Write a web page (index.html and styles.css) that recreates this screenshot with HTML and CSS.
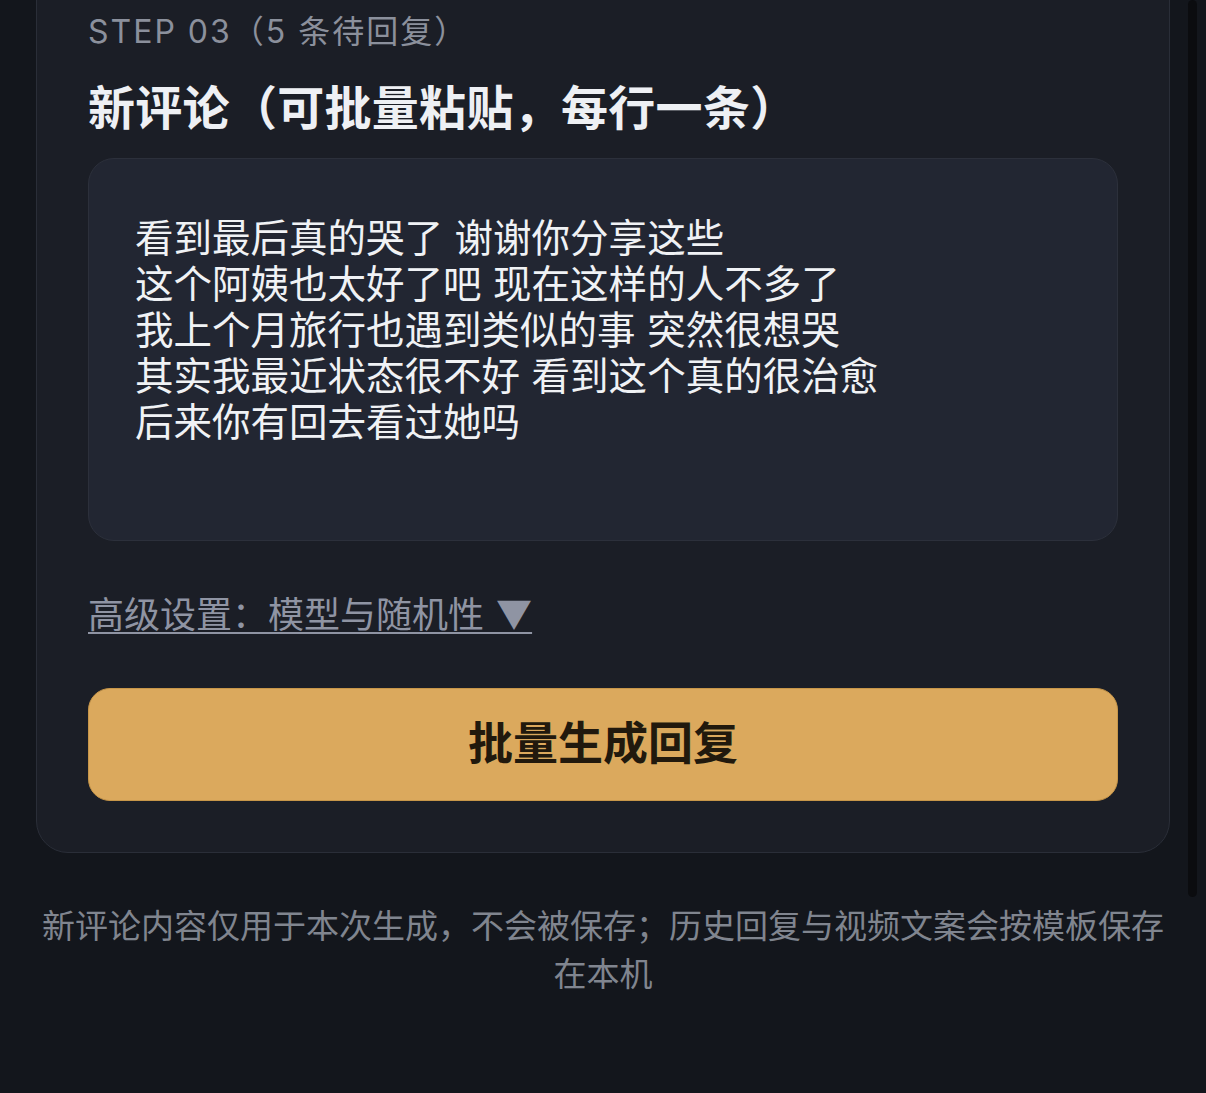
FILE: index.html
```html
<!DOCTYPE html>
<html lang="zh-CN">
<head>
<meta charset="utf-8">
<title>批量生成回复</title>
<link rel="stylesheet" href="styles.css">
</head>
<body>
<div class="page">
  <section class="card">
    <div class="step">STEP 03（5 条待回复）</div>
    <h2 class="title">新评论（可批量粘贴，每行一条）</h2>
    <div class="comments">看到最后真的哭了 谢谢你分享这些
这个阿姨也太好了吧 现在这样的人不多了
我上个月旅行也遇到类似的事 突然很想哭
其实我最近状态很不好 看到这个真的很治愈
后来你有回去看过她吗</div>
    <a class="advanced" href="#">高级设置：模型与随机性 ▼</a>
    <button class="generate" type="button">批量生成回复</button>
  </section>
  <p class="note">新评论内容仅用于本次生成，不会被保存；历史回复与视频文案会按模板保存在本机</p>
</div>
<div class="scrollbar"></div>
</body>
</html>
```

FILE: styles.css
```css
html, body {
  margin: 0;
  padding: 0;
  background: #13161c;
  overflow: hidden;
  height: 100%;
}

body {
  font-family: "Noto Sans CJK SC", "Noto Sans", sans-serif;
  text-spacing-trim: space-all;
  font-kerning: none;
}

.page {
  padding: 0 36px;
}

.card {
  margin-top: -40px;
  background: #1b1e26;
  border: 1px solid #2a2e38;
  border-radius: 32px;
  padding: 51px 51px 51px;
  display: flex;
  flex-direction: column;
}

.step {
  font-family: Inter, "Noto Sans CJK SC", sans-serif;
  font-size: 32px;
  line-height: 40px;
  letter-spacing: 2px;
  color: #8b909c;
}

.title {
  margin: 25px 0 0;
  font-size: 47px;
  line-height: 56px;
  font-weight: 700;
  letter-spacing: 0.3px;
  color: #eef0f4;
}

.comments {
  margin-top: 25px;
  box-sizing: border-box;
  height: 383px;
  background: #222632;
  border: 1px solid #2c303b;
  border-radius: 26px;
  padding: 53px 46px;
  font-size: 38.5px;
  line-height: 46px;
  word-spacing: 3px;
  color: #f0f2f5;
  white-space: pre-line;
}

.advanced {
  align-self: flex-start;
  margin-top: 49px;
  font-size: 36px;
  line-height: 44px;
  color: #8f94a3;
  text-decoration: underline;
  text-decoration-thickness: 2px;
  text-underline-offset: 4px;
  word-spacing: 4px;
}

.generate {
  margin-top: 54px;
  height: 113px;
  padding: 0 0 9px;
  background: #dba95d;
  border: 1px solid #c79649;
  border-radius: 22px;
  font-family: "Noto Sans CJK SC", sans-serif;
  font-size: 45px;
  font-weight: 700;
  color: #21190d;
  cursor: pointer;
}

.note {
  margin: 47px 0 0;
  text-align: center;
  font-size: 33px;
  line-height: 48px;
  color: #80858f;
}

.scrollbar {
  position: fixed;
  left: 1188px;
  top: 0;
  width: 9px;
  height: 897px;
  background: #0b0c0f;
  border-radius: 5px;
}
```
